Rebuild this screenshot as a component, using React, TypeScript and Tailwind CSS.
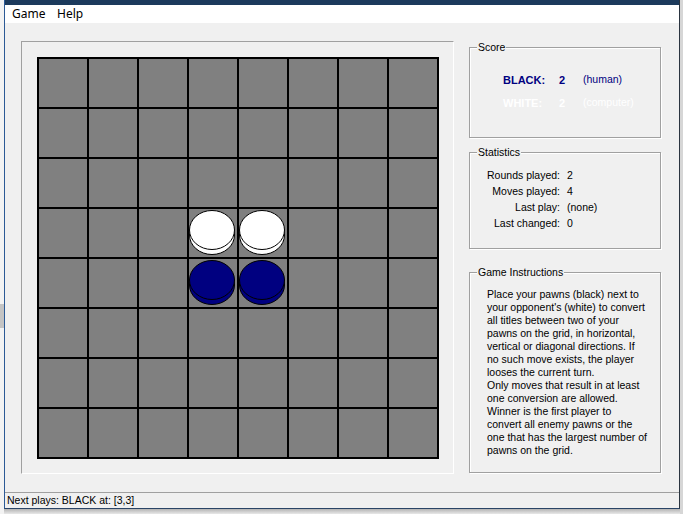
import React from "react"

const CELLS = Array.from({ length: 64 }, (_, i) => i)

const PIECES: Record<number, "white" | "black"> = {
  27: "white",
  28: "white",
  35: "black",
  36: "black",
}

const INSTRUCTIONS = [
  "Place your pawns (black) next to",
  "your opponent's (white) to convert",
  "all titles between two of your",
  "pawns on the grid, in horizontal,",
  "vertical or diagonal directions. If",
  "no such move exists, the player",
  "looses the current turn.",
  "Only moves that result in at least",
  "one conversion are allowed.",
  "Winner is the first player to",
  "convert all enemy pawns or the",
  "one that has the largest number of",
  "pawns on the grid.",
]

function Pawn({ color }: { color: "white" | "black" }) {
  const fill = color === "white" ? "#ffffff" : "#000080"
  return (
    <svg width="48" height="48" viewBox="0 0 48 48" aria-hidden={true}>
      <ellipse cx="23" cy="26" rx="22.5" ry="19.5" fill={fill} stroke="#000" strokeWidth="1" />
      <ellipse cx="23" cy="21" rx="22.5" ry="19.5" fill={fill} stroke="#000" strokeWidth="1" />
    </svg>
  )
}

function GroupBox({
  title,
  className,
  children,
}: {
  title: string
  className: string
  children: React.ReactNode
}) {
  return (
    <div
      className={`relative w-[192px] border border-[#a0a0a0] shadow-[inset_1px_1px_0_#ffffff,1px_1px_0_#ffffff] ${className}`}
    >
      <span className="absolute -top-[8px] left-[7px] bg-[#f0f0f0] px-[1px] text-[10.5px] leading-[14px] text-black">
        {title}
      </span>
      {children}
    </div>
  )
}

function Board() {
  return (
    <div className="w-[433px] h-[433px] border-l border-t border-[#a0a0a0] border-r-white border-b-white border-r border-b pl-[15px] pt-[15px]">
      <div className="grid w-[402px] h-[402px] grid-cols-8 gap-[2px] bg-black p-[2px]">
        {CELLS.map((i) => (
          <div key={i} className="flex h-[48px] w-[48px] items-start justify-start bg-[#808080]">
            {PIECES[i] ? <Pawn color={PIECES[i]} /> : null}
          </div>
        ))}
      </div>
    </div>
  )
}

function ScoreBox() {
  return (
    <GroupBox title="Score" className="h-[91px] pl-[33px] pt-[24px]">
      <div className="flex h-[16px] items-center text-[#000080]">
        <span className="w-[56px] text-[11px] font-bold">BLACK:</span>
        <span className="w-[24px] text-[11px] font-bold">2</span>
        <span className="text-[10.5px]">(human)</span>
      </div>
      <div className="mt-[7px] flex h-[16px] items-center text-white">
        <span className="w-[56px] text-[11px] font-bold">WHITE:</span>
        <span className="w-[24px] text-[11px] font-bold">2</span>
        <span className="text-[10.5px]">(computer)</span>
      </div>
    </GroupBox>
  )
}

const STATS = [
  ["Rounds played:", "2"],
  ["Moves played:", "4"],
  ["Last play:", "(none)"],
  ["Last changed:", "0"],
]

function StatsBox() {
  return (
    <GroupBox title="Statistics" className="mt-[14px] h-[97px] pt-[15px]">
      {STATS.map(([label, value]) => (
        <div key={label} className="flex h-[16px] items-center text-[10.5px] text-black">
          <span className="w-[90px] text-right">{label}</span>
          <span className="ml-[7px]">{value}</span>
        </div>
      ))}
    </GroupBox>
  )
}

function InstructionsBox() {
  return (
    <GroupBox title="Game Instructions" className="mt-[23px] h-[201px] pl-[17px] pt-[15px]">
      {INSTRUCTIONS.map((line) => (
        <div key={line} className="h-[13px] whitespace-nowrap text-[10.5px] leading-[13px] text-black">
          {line}
        </div>
      ))}
    </GroupBox>
  )
}

export default function App() {
  return (
    <div className="flex h-[514px] w-[683px] overflow-hidden bg-[#e4e4e4] font-['Liberation_Sans',Arial,sans-serif]">
      {/* desktop strip on the left */}
      <div className="flex w-[4px] flex-col bg-[#f3f3f3]">
        <div className="h-[304px]" />
        <div className="h-[24px] bg-[#c4c4c4]" />
      </div>

      <div className="flex w-[676px] flex-col">
        <div className="flex h-[509px] flex-col border-b border-l border-r border-b-[#2a4466] border-l-[#2c5a96] border-r-[#2a3440] bg-[#f0f0f0]">
          <div className="h-[5px] bg-[#1c3a5c]" />
          <div className="flex h-[18px] items-center bg-white font-['Noto_Sans',sans-serif] text-[12px] text-black">
            <span className="ml-[7px] w-[45px]">Game</span>
            <span>Help</span>
          </div>

          <div className="flex h-[469px] items-start">
            <div className="ml-[16px] mt-[18px]">
              <Board />
            </div>
            <div className="ml-[15px] mt-[24px] flex flex-col">
              <ScoreBox />
              <StatsBox />
              <InstructionsBox />
            </div>
          </div>

          <div className="flex h-[16px] items-center border-t border-[#a0a0a0] pl-[2px] text-[10.5px] text-black">
            Next plays: BLACK at: [3,3]
          </div>
        </div>
        <div className="h-[5px] bg-gradient-to-b from-[#b4b4b4] to-[#e8e8e8]" />
      </div>

      <div className="w-[3px] bg-[#d6d6d6]" />
    </div>
  )
}
